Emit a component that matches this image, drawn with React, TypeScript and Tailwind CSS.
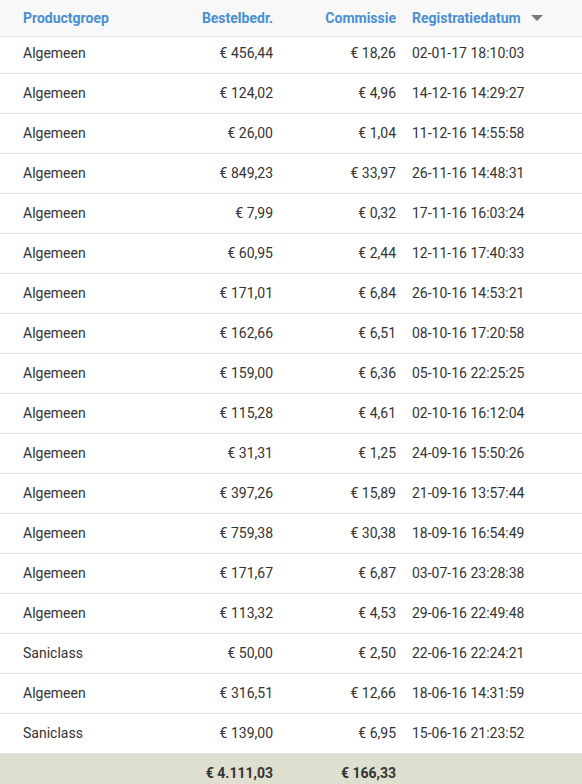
const rows: [string, string, string, string][] = [
  ["Algemeen", "€ 456,44", "€ 18,26", "02-01-17 18:10:03"],
  ["Algemeen", "€ 124,02", "€ 4,96", "14-12-16 14:29:27"],
  ["Algemeen", "€ 26,00", "€ 1,04", "11-12-16 14:55:58"],
  ["Algemeen", "€ 849,23", "€ 33,97", "26-11-16 14:48:31"],
  ["Algemeen", "€ 7,99", "€ 0,32", "17-11-16 16:03:24"],
  ["Algemeen", "€ 60,95", "€ 2,44", "12-11-16 17:40:33"],
  ["Algemeen", "€ 171,01", "€ 6,84", "26-10-16 14:53:21"],
  ["Algemeen", "€ 162,66", "€ 6,51", "08-10-16 17:20:58"],
  ["Algemeen", "€ 159,00", "€ 6,36", "05-10-16 22:25:25"],
  ["Algemeen", "€ 115,28", "€ 4,61", "02-10-16 16:12:04"],
  ["Algemeen", "€ 31,31", "€ 1,25", "24-09-16 15:50:26"],
  ["Algemeen", "€ 397,26", "€ 15,89", "21-09-16 13:57:44"],
  ["Algemeen", "€ 759,38", "€ 30,38", "18-09-16 16:54:49"],
  ["Algemeen", "€ 171,67", "€ 6,87", "03-07-16 23:28:38"],
  ["Algemeen", "€ 113,32", "€ 4,53", "29-06-16 22:49:48"],
  ["Saniclass", "€ 50,00", "€ 2,50", "22-06-16 22:24:21"],
  ["Algemeen", "€ 316,51", "€ 12,66", "18-06-16 14:31:59"],
  ["Saniclass", "€ 139,00", "€ 6,95", "15-06-16 21:23:52"],
];

const cols = "grid grid-cols-[193px_88px_123px_178px] items-center";

export default function App() {
  return (
    <div className="h-[784px] w-[582px] overflow-hidden bg-white font-['Roboto',sans-serif] text-[14px] text-[#333]">
      <div
        className={`${cols} h-[37px] border-b border-[#e0e0e0] bg-[#f8f8f8] font-bold text-[#4a8fd1]`}
      >
        <div className="pl-[23px]">Productgroep</div>
        <div className="pr-[8px] text-right">Bestelbedr.</div>
        <div className="pr-[8px] text-right">Commissie</div>
        <div className="flex items-center pl-[8px]">
          Registratiedatum
          <span className="ml-[10px] h-0 w-0 border-x-[6px] border-t-[6px] border-x-transparent border-t-[#777]" />
        </div>
      </div>
      {rows.map((r, i) => (
        <div
          key={i}
          className={`${cols} border-b border-[#e0e0e0] ${i === 0 ? "h-[37px] pb-[3px]" : "h-[40px]"}`}
        >
          <div className="pl-[23px]">{r[0]}</div>
          <div className="pr-[8px] text-right">{r[1]}</div>
          <div className="pr-[8px] text-right">{r[2]}</div>
          <div className="pl-[8px]">{r[3]}</div>
        </div>
      ))}
      <div className={`${cols} h-[40px] bg-[#dfdfd0] pb-[2px] font-bold`}>
        <div />
        <div className="pr-[8px] text-right">€ 4.111,03</div>
        <div className="pr-[8px] text-right">€ 166,33</div>
        <div />
      </div>
    </div>
  );
}
